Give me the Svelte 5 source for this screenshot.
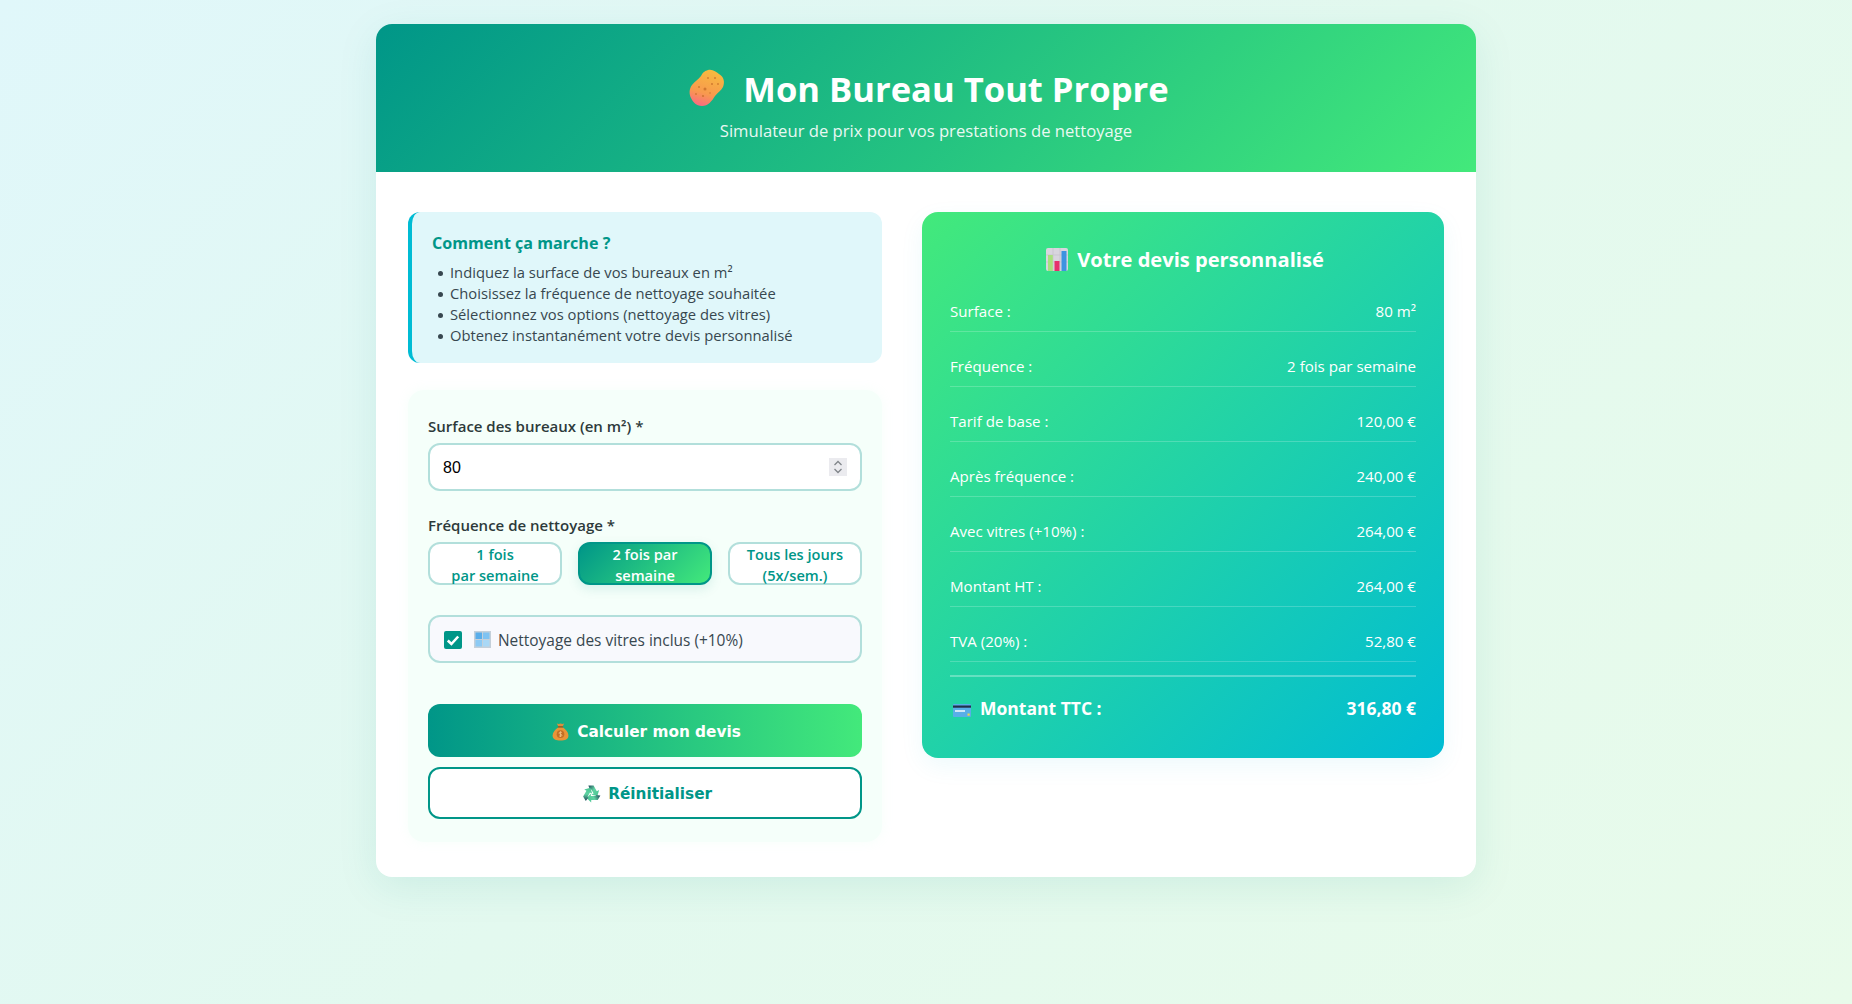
<script>
  const rows = [
    ['Surface :', '80 m²'],
    ['Fréquence :', '2 fois par semaine'],
    ['Tarif de base :', '120,00 €'],
    ['Après fréquence :', '240,00 €'],
    ['Avec vitres (+10%) :', '264,00 €'],
    ['Montant HT :', '264,00 €'],
    ['TVA (20%) :', '52,80 €']
  ];
  const steps = [
    'Indiquez la surface de vos bureaux en m²',
    'Choisissez la fréquence de nettoyage souhaitée',
    'Sélectionnez vos options (nettoyage des vitres)',
    'Obtenez instantanément votre devis personnalisé'
  ];
</script>

<div class="page">
  <main class="shell">
    <header class="hero">
      <h1>
        <svg class="sponge" viewBox="0 0 36 38" aria-hidden="true">
          <defs>
            <linearGradient id="sp" x1="0.65" y1="0" x2="0.35" y2="1">
              <stop offset="0" stop-color="#f7bb3e" />
              <stop offset="0.65" stop-color="#f89a4e" />
              <stop offset="1" stop-color="#f96d80" />
            </linearGradient>
          </defs>
          <path d="M19 1C24 0 27 3 30 5C35 8 36 13 34 18C32 22 29 23 26 27C23 32 19 37 13 37C7 37 4 33 2 29C0 25 0 20 3 16C6 12 9 11 12 7C14 3 16 2 19 1z" fill="url(#sp)" />
          <g fill="#c8702a" opacity=".8">
            <circle cx="19" cy="9" r=".9" /><circle cx="26" cy="9" r="1" /><circle cx="29" cy="15" r=".9" />
            <circle cx="10" cy="18" r="1" /><circle cx="16" cy="20" r="1.5" /><circle cx="23" cy="15" r="1" />
            <circle cx="7" cy="25" r=".9" /><circle cx="14" cy="27" r="1.1" /><circle cx="21" cy="24" r=".8" />
          </g>
        </svg>
        <span>Mon Bureau Tout Propre</span>
      </h1>
      <p>Simulateur de prix pour vos prestations de nettoyage</p>
    </header>

    <div class="content">
      <section class="left">
        <div class="info">
          <h3>Comment ça marche ?</h3>
          <ul>
            {#each steps as s}<li>{s}</li>{/each}
          </ul>
        </div>

        <form class="form" onsubmit={(e) => e.preventDefault()}>
          <label class="lab" for="surface">Surface des bureaux (en m²) *</label>
          <div class="number">
            <span id="surface">80</span>
            <span class="spin">
              <svg viewBox="0 0 18 18" aria-hidden="true"><path d="M5.500 7 9 3.500 12.500 7M5.500 11 9 14.500 12.500 11" fill="none" stroke="#80858a" stroke-width="1.3" /></svg>
            </span>
          </div>

          <div class="lab second">Fréquence de nettoyage *</div>
          <div class="freq">
            <button type="button" class="opt">1 fois<br />par semaine</button>
            <button type="button" class="opt on">2 fois par semaine</button>
            <button type="button" class="opt">Tous les jours (5x/sem.)</button>
          </div>

          <div class="check">
            <span class="box">
              <svg viewBox="0 0 18 18" aria-hidden="true"><path d="M3.800 9.500 7.400 13 14.200 5.500" fill="none" stroke="#fff" stroke-width="2.6" /></svg>
            </span>
            <svg class="win" viewBox="0 0 17 17" aria-hidden="true">
              <rect width="17" height="17" fill="#c4d0da" />
              <rect x="1.500" y="1.500" width="6.500" height="6.500" fill="#5aaeea" />
              <rect x="9" y="1.500" width="6.500" height="6.500" fill="#7fc3f2" />
              <rect x="1.500" y="9" width="6.500" height="6.500" fill="#8ccaf4" />
              <rect x="9" y="9" width="6.500" height="6.500" fill="#a9d8f6" />
            </svg>
            <span>Nettoyage des vitres inclus (+10%)</span>
          </div>

          <button type="button" class="cta">
            <svg class="bag" viewBox="0 0 16 18" aria-hidden="true">
              <path d="M4.500 1.500c1.200.6 2 .6 3.500 0 1.500.6 2.300.6 3.500 0L10 4.500H6z" fill="#d98f3f" />
              <path d="M6 5h4c3 2 5.500 4.800 5.500 8 0 3.200-3.200 4.500-7.500 4.500S.5 16.200.5 13C.5 9.800 3 7 6 5z" fill="#ea9437" />
              <rect x="5.500" y="4" width="5" height="1.300" rx=".5" fill="#8a5420" />
              <circle cx="8" cy="11.500" r="3.600" fill="#c46f25" />
              <path d="M9.400 10c-1-.7-2.800-.5-2.800.6s2.800.8 2.800 1.900-1.800 1.300-2.800.6M8 8.800v5.400" fill="none" stroke="#f7c98a" stroke-width=".7" />
            </svg>
            <span class="lbl">Calculer mon devis</span>
          </button>
          <button type="button" class="reset">
            <svg class="rec" viewBox="-9 -8.500 18 17" aria-hidden="true">
              <defs>
                <linearGradient id="rc" x1="0" y1="0" x2="1" y2="0.600">
                  <stop offset="0.1" stop-color="#2a5f66" />
                  <stop offset="0.55" stop-color="#5fd3a2" />
                  <stop offset="1" stop-color="#4cc795" />
                </linearGradient>
              </defs>
              <g fill="url(#rc)">
                <path d="M-3 -8 L2 -8 L5 -2.600 L7.200 -3.800 L5.600 2 L-.2 .8 L2 -.5 L-.2 -4.300 L-1.500 -4.300 z" />
                <path d="M-3 -8 L2 -8 L5 -2.600 L7.200 -3.800 L5.600 2 L-.2 .8 L2 -.5 L-.2 -4.300 L-1.500 -4.300 z" transform="rotate(120)" />
                <path d="M-3 -8 L2 -8 L5 -2.600 L7.200 -3.800 L5.600 2 L-.2 .8 L2 -.5 L-.2 -4.300 L-1.500 -4.300 z" transform="rotate(240)" />
              </g>
            </svg>
            <span class="lbl">Réinitialiser</span>
          </button>
        </form>
      </section>

      <aside class="quote">
        <h2>
          <svg class="chart" viewBox="0 0 22 23" aria-hidden="true">
            <rect width="22" height="23" rx="2" fill="#d8d5de" />
            <path d="M0 7h22M0 14h22M7 0v23M14 0v23" stroke="#c5c2cc" stroke-width=".7" />
            <rect x="2" y="7" width="4.800" height="16" fill="#a8e07e" />
            <rect x="8.500" y="13" width="5" height="10" fill="#e6306c" />
            <rect x="15.500" y="3" width="5" height="20" fill="#3d93e0" />
          </svg>
          Votre devis personnalisé
        </h2>
        {#each rows as r}
          <div class="row"><span>{r[0]}</span><span>{r[1]}</span></div>
        {/each}
        <div class="total">
          <span class="ttc">
            <svg class="card" viewBox="0 0 18 13" aria-hidden="true">
              <rect width="18" height="13" rx="1" fill="#58aee8" />
              <rect y="1.500" width="18" height="2.200" fill="#22304a" />
              <rect x="2" y="6" width="10" height="2" fill="#cfe8f8" />
              <rect x="14.500" y="9.500" width="2.200" height="2.200" fill="#f2d44a" />
            </svg>
            Montant TTC :
          </span>
          <span>316,80 €</span>
        </div>
      </aside>
    </div>
  </main>
</div>

<style>
  :global(body) { margin: 0; font-family: "Open Sans", "Noto Sans", sans-serif; }
  .page {
    box-sizing: border-box;
    min-height: 1004px;
    padding: 24px 376px;
    background: linear-gradient(135deg, #e0f7fa 0%, #e3f9ef 50%, #e8fbea 100%);
  }
  .shell {
    width: 1100px;
    height: 853px;
    background: #fff;
    border-radius: 16px;
    overflow: hidden;
    box-shadow: 0 10px 40px rgba(0, 137, 123, 0.1);
  }
  .hero {
    height: 148px;
    box-sizing: border-box;
    padding-top: 40px;
    text-align: center;
    color: #fff;
    background: linear-gradient(135deg, #009688 0%, #43e97b 100%);
  }
  h1 {
    margin: 0;
    padding-left: 6px;
    display: flex;
    justify-content: center;
    align-items: center;
    gap: 18px;
    height: 48px;
    font-size: 34.600px;
    font-weight: 700;
  }
  .sponge { width: 36px; height: 38px; }
  .hero p { margin: 7px 0 0; font-size: 16.650px; line-height: 24px; opacity: .9; }
  .content {
    display: grid;
    grid-template-columns: 474px 522px;
    gap: 40px;
    padding: 40px 32px 32px;
    align-items: start;
    color: #2d3a3a;
  }
  .info {
    box-sizing: border-box;
    height: 151px;
    padding: 20px 20px 0 20px;
    background: #e0f7fa;
    border-left: 4px solid #00bcd4;
    border-radius: 12px;
  }
  h3 { margin: 0 0 7px; font-size: 16.100px; line-height: 23px; color: #009688; font-weight: 700; }
  ul { margin: 0; padding: 0 0 0 18px; font-size: 14.750px; line-height: 21px; color: #37474f; list-style: none; }
  li::before {
    content: "";
    display: inline-block;
    width: 5px;
    height: 5px;
    margin: 0 7.500px 2px -12.500px;
    border-radius: 50%;
    background: #37474f;
    vertical-align: middle;
  }
  .form {
    box-sizing: border-box;
    margin-top: 27px;
    height: 452px;
    padding: 26px 20px 24px;
    background: #f5fffa;
    border-radius: 16px;
    box-shadow: 0 0 12px rgba(245, 255, 250, .9);
    display: flex;
    flex-direction: column;
  }
  .form > * { flex-shrink: 0; }
  .lab { display: block; font-size: 15px; font-weight: 600; line-height: 21px; color: #2d3a3a; margin-bottom: 6px; }
  .second { margin: 24px 0 6px; }
  .number {
    box-sizing: border-box;
    height: 48px;
    padding: 1px 13px 0 13px;
    display: flex;
    align-items: center;
    justify-content: space-between;
    background: #fff;
    border: 2px solid #b2dfdb;
    border-radius: 12px;
    font: 16px "Liberation Sans", sans-serif;
    color: #000;
  }
  .spin { width: 18px; height: 18px; background: #ebebef; display: block; margin-top: -1px; }
  .spin svg { display: block; width: 18px; height: 18px; }
  .freq { display: grid; grid-template-columns: repeat(3, 134px); gap: 16px; }
  .opt {
    box-sizing: border-box;
    height: 43px;
    padding: 0 12px 1px;
    background: #fff;
    border: 2px solid #b2dfdb;
    border-radius: 12px;
    color: #009688;
    font: 600 14.600px/21px "Open Sans", sans-serif;
    overflow: visible;
  }
  .opt.on {
    color: #fff;
    border-color: #009688;
    background: linear-gradient(135deg, #009688, #43e97b);
    box-shadow: 0 4px 12px rgba(0, 137, 123, .12);
  }
  .check {
    box-sizing: border-box;
    margin-top: 30px;
    height: 48px;
    padding: 1px 14px 0 14px;
    display: flex;
    align-items: center;
    gap: 12px;
    background: #f8f9fd;
    border: 2px solid #b2dfdb;
    border-radius: 12px;
    font-size: 15.450px;
    color: #37474f;
  }
  .box { width: 18px; height: 18px; background: #009688; border-radius: 2px; display: block; }
  .box svg { display: block; width: 18px; height: 18px; }
  .win { width: 17px; height: 17px; margin-right: -5px; }
  .cta, .reset {
    box-sizing: border-box;
    width: 100%;
    display: flex;
    align-items: center;
    justify-content: center;
    border-radius: 12px;
    font: 700 15.300px "DejaVu Sans", sans-serif;
  }
  .lbl { padding-top: 2px; }
  .cta { margin-top: 41px; height: 53px; padding: 0 6px 0 8.400px; gap: 8.600px; border: 0; color: #fff; background: linear-gradient(90deg, #009688, #43e97b); }
  .reset { margin-top: 10px; height: 52px; padding: 0 6px 0 10.200px; gap: 7px; background: #fff; border: 2px solid #009688; color: #009688; }
  .bag { width: 17px; height: 19px; margin-top: 1px; }
  .rec { width: 19px; height: 18px; margin-top: 2px; }
  .quote {
    box-sizing: border-box;
    height: 546px;
    padding: 31px 28px;
    color: #fff;
    border-radius: 16px;
    background: linear-gradient(135deg, #43e97b 0%, #00bcd4 100%);
    box-shadow: 0 8px 24px rgba(0, 188, 212, .07);
  }
  h2 {
    margin: 0 0 25px;
    padding-left: 4px;
    display: flex;
    justify-content: center;
    align-items: center;
    gap: 9px;
    height: 32px;
    font-size: 20.100px;
    font-weight: 700;
  }
  .chart { width: 22px; height: 23px; }
  .row {
    box-sizing: border-box;
    height: 55px;
    padding-top: 23px;
    display: flex;
    justify-content: space-between;
    font-size: 15.100px;
    line-height: 22px;
    border-bottom: 1px solid rgba(255, 255, 255, .2);
  }
  .row:first-of-type { height: 32px; padding-top: 0; }
  .total {
    margin-top: 13px;
    padding-top: 18px;
    border-top: 2px solid rgba(255, 255, 255, .3);
    display: flex;
    justify-content: space-between;
    font-size: 17.500px;
    font-weight: 700;
    line-height: 26px;
  }
  .ttc { display: flex; align-items: center; gap: 9px; padding-left: 3px; }
  .card { width: 18px; height: 13px; margin-top: 4px; }
</style>
